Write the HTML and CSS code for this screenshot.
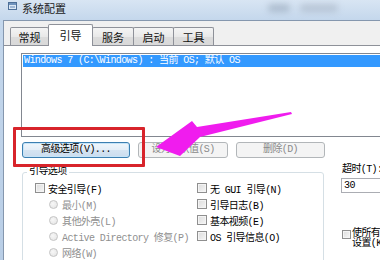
FILE: index.html
```html
<!DOCTYPE html>
<html lang="zh-CN">
<head>
<meta charset="utf-8">
<title>系统配置</title>
<link rel="stylesheet" href="styles.css">
</head>
<body>
<div class="titlebar">
  <svg class="appicon" width="9" height="8" viewBox="0 0 9 8"><rect x="0.5" y="0.5" width="8" height="7" fill="#dce8f5" stroke="#4d6f98"/><rect x="1" y="1" width="7" height="2" fill="#6f93bd"/><rect x="2" y="4" width="5" height="2" fill="#9fb8d6"/></svg>
  <span class="title">系统配置</span>
  <span class="smudge s1"></span>
  <span class="smudge s2"></span>
</div>
<div class="client">
  <div class="tabs">
    <div class="tab t1">常规</div>
    <div class="tab t2 active">引导</div>
    <div class="tab t3">服务</div>
    <div class="tab t4">启动</div>
    <div class="tab t5">工具</div>
  </div>
  <div class="panel">
    <div class="listbox">
      <div class="row sel">Windows 7 (C:\Windows) : 当前 OS; 默认 OS</div>
    </div>
    <div class="btnrow">
      <div class="btn default b1">高级选项(V)...</div>
      <div class="btn disabled b2">设为默认值(S)</div>
      <div class="btn disabled b3">删除(D)</div>
    </div>
    <div class="lower">
      <fieldset class="group">
        <legend>引导选项</legend>
        <div class="cols">
          <div class="col left">
            <div class="opt"><span class="chk"></span>安全引导(F)</div>
            <div class="opt sub dis"><span class="rad"></span>最小(M)</div>
            <div class="opt sub dis"><span class="rad"></span>其他外壳(L)</div>
            <div class="opt sub dis"><span class="rad"></span>Active Directory 修复(P)</div>
            <div class="opt sub dis"><span class="rad"></span>网络(W)</div>
          </div>
          <div class="col right">
            <div class="opt"><span class="chk"></span>无 GUI 引导(N)</div>
            <div class="opt"><span class="chk"></span>引导日志(B)</div>
            <div class="opt"><span class="chk"></span>基本视频(E)</div>
            <div class="opt"><span class="chk"></span>OS 引导信息(O)</div>
          </div>
        </div>
      </fieldset>
      <div class="side">
        <div class="tlabel">超时(T):</div>
        <div class="tinput">30</div>
        <div class="perm"><span class="chk"></span><span class="ptext">使所有引导设置成为永久设置(K)</span></div>
      </div>
    </div>
  </div>
</div>
<div class="highlight"></div>
<svg class="arrow" width="380" height="260" viewBox="0 0 380 260"><polygon points="291,112 197,127 192,121 156,147 180,156 200,137 292,114" fill="#f01cee"/></svg>
</body>
</html>
```
FILE: styles.css
```css
html, body {
  margin: 0;
  padding: 0;
}
body {
  width: 380px;
  height: 260px;
  overflow: hidden;
  position: relative;
  background: linear-gradient(#d8e5f3, #c4d7ec 20px, #b9cee6);
  font-family: "Liberation Mono", "Noto Sans CJK SC", monospace;
  font-size: 10px;
  letter-spacing: -0.6px;
  color: #000;
}
.titlebar {
  height: 20px;
  display: flex;
  align-items: flex-start;
  padding: 0 0 0 8px;
  box-sizing: border-box;
  position: relative;
}
.appicon {
  margin-top: 2px;
  flex: none;
}
.title {
  margin-left: 5px;
  margin-top: 1px;
  font-family: "Noto Sans CJK SC", sans-serif;
  font-size: 11px;
  line-height: 14px;
  letter-spacing: 0;
  color: #1a1a1a;
}
.smudge {
  position: absolute;
  top: 4px;
  height: 8px;
  border-radius: 4px;
  filter: blur(3px);
  background: rgba(110, 125, 145, 0.35);
}
.s1 { left: 268px; width: 22px; }
.s2 { left: 300px; width: 38px; background: rgba(130, 140, 155, 0.3); }
.client {
  margin-left: 3px;
  border-left: 1px solid #8597ae;
  border-top: 1px solid #8597ae;
  background: #f0f0f0;
  height: 240px;
}
.tabs {
  display: flex;
  align-items: flex-end;
  height: 24px;
  padding-left: 6px;
}
.tab {
  box-sizing: border-box;
  height: 18px;
  border: 1px solid #8e9199;
  border-bottom: none;
  border-radius: 2px 2px 0 0;
  margin-left: -1px;
  background: linear-gradient(#f4f4f4, #e9e9e9 50%, #dcdcdc 51%, #d9d9d9);
  font-family: "Noto Sans CJK SC", sans-serif;
  font-size: 11px;
  letter-spacing: 0;
  display: flex;
  align-items: center;
  justify-content: center;
  color: #111;
}
.t1 { width: 39px; margin-left: 0; }
.t2 { width: 45px; }
.t3 { width: 42px; }
.t4 { width: 41px; }
.t5 { width: 41px; }
.tab.active {
  height: 22px;
  margin-bottom: -1px;
  background: #fff;
  position: relative;
  z-index: 1;
  padding-bottom: 2px;
}
.panel {
  border-top: 1px solid #8e9199;
  background: #fff;
  height: 214px;
  overflow: hidden;
}
.listbox {
  margin: 7px 0 0 17px;
  width: 400px;
  height: 82px;
  border: 1px solid #828790;
}
.row.sel {
  margin: 1px 1px 0 1px;
  height: 12px;
  line-height: 12px;
  background: #3399ff;
  color: #fff;
  padding-left: 1px;
  white-space: nowrap;
}
.btnrow {
  display: flex;
  gap: 8px;
  margin: 5px 0 0 18px;
}
.btn {
  box-sizing: border-box;
  height: 16px;
  border: 1px solid #707070;
  border-radius: 3px;
  display: flex;
  align-items: center;
  justify-content: center;
  line-height: 12px;
  white-space: nowrap;
}
.b1 { width: 108px; }
.b2 { width: 90px; }
.b3 { width: 89px; }
.btn.default {
  border-color: #3c7fb1;
  background: linear-gradient(#f0f6fb, #e4eef8 50%, #d5e4f2 51%, #cbdcee);
  box-shadow: inset 0 0 0 1px #c6e4f8;
}
.btn.disabled {
  border-color: #b2b6b9;
  background: #f4f4f4;
  color: #8a8a8a;
}
.lower {
  display: flex;
  margin-top: 8px;
}
.group {
  flex: none;
  box-sizing: border-box;
  width: 302px;
  height: 140px;
  margin: 0 0 0 18px;
  padding: 2px 0 0 0;
  border: 1px solid #d5dfe5;
  border-radius: 3px;
  min-inline-size: 0;
}
.group legend {
  margin-left: 4px;
  padding: 0 2px;
  line-height: 12px;
  font-size: 10px;
}
.cols {
  display: flex;
  padding-left: 12px;
}
.col.left { width: 162px; }
.opt {
  height: 16px;
  display: flex;
  align-items: center;
  white-space: nowrap;
}
.opt.sub { padding-left: 14px; }
.opt.dis { color: #8f8f8f; }
.chk {
  flex: none;
  box-sizing: border-box;
  width: 10px;
  height: 10px;
  margin-right: 3px;
  border: 1px solid #8f8f8f;
  background: linear-gradient(135deg, #dcdcdc, #f6f6f6);
  box-shadow: inset 0 0 0 1px #f4f4f4;
}
.rad {
  flex: none;
  box-sizing: border-box;
  width: 9px;
  height: 9px;
  margin-right: 4px;
  border: 1px solid #c4c4c4;
  border-radius: 50%;
  background: radial-gradient(circle at 40% 40%, #f7f7f7, #e2e2e2);
}
.side {
  flex: none;
  width: 200px;
  margin-left: 18px;
}
.tlabel {
  margin-top: -2px;
  line-height: 12px;
}
.tinput {
  box-sizing: border-box;
  margin: 2px 0 0 -1px;
  width: 60px;
  height: 15px;
  border: 1px solid #abadb3;
  padding-left: 2px;
  line-height: 13px;
}
.perm {
  display: flex;
  align-items: flex-start;
  margin-top: 36px;
}
.perm .chk {
  width: 9px;
  height: 9px;
  margin-right: 1px;
  margin-top: 1px;
}
.ptext {
  width: 112px;
  line-height: 10px;
}
.highlight {
  position: absolute;
  left: 13px;
  top: 127px;
  width: 132px;
  height: 40px;
  box-sizing: border-box;
  border: 3px solid #d8242b;
  border-radius: 1px;
}
.arrow {
  position: absolute;
  left: 0;
  top: 0;
  pointer-events: none;
}
```
